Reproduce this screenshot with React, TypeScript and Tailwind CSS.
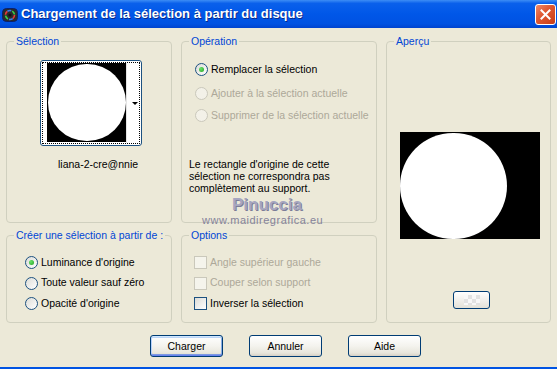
import React from 'react';

const Radio: React.FC<{ label: string; checked?: boolean; disabled?: boolean }> = ({ label, checked, disabled }) => (
  <div className="flex items-center h-[13px] gap-[3px]">
    <span
      className={
        disabled
          ? 'w-[13px] h-[13px] rounded-full border border-[#CAC8BB] bg-[#F3F1E8] flex items-center justify-center'
          : 'w-[13px] h-[13px] rounded-full border border-[#1C5180] bg-[linear-gradient(135deg,#DCDCD7,#FFFFFF)] flex items-center justify-center'
      }
    >
      {checked && <span className="w-[5px] h-[5px] rounded-full bg-[radial-gradient(circle_at_35%_35%,#6AE36A,#21A121)]" />}
    </span>
    <span className={disabled ? 'text-[#ACA899] whitespace-nowrap' : 'whitespace-nowrap'}>{label}</span>
  </div>
);

const Check: React.FC<{ label: string; disabled?: boolean }> = ({ label, disabled }) => (
  <div className="flex items-center h-[13px] gap-[3px]">
    <span
      className={
        disabled
          ? 'w-[13px] h-[13px] border border-[#CAC8BB] bg-[#F5F4EC]'
          : 'w-[13px] h-[13px] border border-[#1C5180] bg-[linear-gradient(135deg,#DCDCD7,#FFFFFF)]'
      }
    />
    <span className={disabled ? 'text-[#ACA899] whitespace-nowrap' : 'whitespace-nowrap'}>{label}</span>
  </div>
);

const Legend: React.FC<{ children: React.ReactNode }> = ({ children }) => (
  <legend className="ml-[7px] px-[2px] text-[#0046D5] leading-[13px] whitespace-nowrap">{children}</legend>
);

const XpButton: React.FC<{ label: string; isDefault?: boolean }> = ({ label, isDefault }) => (
  <button
    className={
      'w-[73px] h-[22px] rounded-[3px] border border-[#003C74] bg-[linear-gradient(to_bottom,#FFFFFF_0%,#F4F3EE_50%,#E8E6DC_85%,#D6D0C5_100%)] leading-[20px] text-black ' +
      (isDefault
        ? 'shadow-[inset_0_1px_0_#CEE7FF,inset_0_-1px_0_#6982EE,inset_1px_0_0_#B8D2FC,inset_-1px_0_0_#89ADE4,inset_0_2px_0_#BCD4F6,inset_0_-2px_0_#7D99E1]'
        : '')
    }
  >
    {label}
  </button>
);

const AppIcon = () => (
  <svg width="16" height="16" viewBox="0 0 16 16">
    <rect x="0.5" y="1.5" width="15" height="13" rx="4" fill="#2B2B2B" stroke="#0B1F6B" />
    <circle cx="8" cy="8" r="4.5" fill="none" stroke="#E83A3A" strokeWidth="1.6" strokeDasharray="4 10" />
    <circle cx="8" cy="8" r="4.5" fill="none" stroke="#3AD24A" strokeWidth="1.6" strokeDasharray="4 10" strokeDashoffset="5" />
    <circle cx="8" cy="8" r="4.5" fill="none" stroke="#3A7AE8" strokeWidth="1.6" strokeDasharray="4 10" strokeDashoffset="10" />
    <circle cx="8" cy="8" r="1.6" fill="#111" />
  </svg>
);

export default function App() {
  return (
    <div className="w-[557px] h-[369px] flex flex-col overflow-hidden font-['Liberation_Sans',Arial,sans-serif] text-[10.5px] text-black">
      {/* title bar */}
      <div className="h-[28px] flex items-center bg-[linear-gradient(to_bottom,#3D8DF5_0%,#0A60EB_12%,#0057E8_50%,#0052E2_85%,#0043CF_100%)]">
        <span className="ml-[2px] mt-[1px]"><AppIcon /></span>
        <span className="ml-[3px] text-white text-[13px] font-bold [text-shadow:1px_1px_0_#0A2A8A]">
          Chargement de la sélection à partir du disque
        </span>
        <div className="ml-auto mr-[1px] w-[21px] h-[21px] rounded-[3px] border border-white bg-[linear-gradient(135deg,#EE8A6A_0%,#E05A34_40%,#C83C16_100%)] flex items-center justify-center">
          <svg width="11" height="11" viewBox="0 0 11 11">
            <path d="M1.5 1.5 L9.5 9.5 M9.5 1.5 L1.5 9.5" stroke="white" strokeWidth="2" strokeLinecap="square" />
          </svg>
        </div>
      </div>

      {/* body */}
      <div className="flex-1 bg-[#ECE9D8] border-b-2 border-[#0054E3] pl-[6px] pt-[7px]">
        <div className="grid grid-cols-[166px_196px_165px] grid-rows-[188px_94px] gap-x-[9px] gap-y-[6px]">
          <fieldset className="border border-[#D0D0BF] rounded-[4px]">
            <Legend>Sélection</Legend>
            <div className="ml-[33px] mt-[12px] w-[102px] h-[86px] rounded-[3px] border border-[#1C5180] bg-white p-[1px]">
              <div className="h-full border border-dotted border-black flex pl-[4px]">
                <div className="w-[79px] h-[79px] bg-black flex items-center justify-center">
                  <div className="w-[78px] h-[77px] rounded-full bg-white" />
                </div>
                <div className="flex-1 flex items-center justify-end pr-[1px] border-l border-[#E4E4E4]">
                  <span className="w-0 h-0 border-l-[3px] border-r-[3px] border-t-[3px] border-l-transparent border-r-transparent border-t-black" />
                </div>
              </div>
            </div>
            <div className="ml-[51px] mt-[12px] leading-[13px]">liana-2-cre@nnie</div>
          </fieldset>

          <fieldset className="relative border border-[#D0D0BF] rounded-[4px]">
            <Legend>Opération</Legend>
            <div className="ml-[13px] mt-[15px] flex flex-col">
              <Radio label="Remplacer la sélection" checked />
              <div className="mt-[11px]"><Radio label="Ajouter à la sélection actuelle" disabled /></div>
              <div className="mt-[9px]"><Radio label="Supprimer de la sélection actuelle" disabled /></div>
            </div>
            <p className="ml-[7px] mt-[36px] leading-[12px]">
              Le rectangle d'origine de cette
              <br />
              sélection ne correspondra pas
              <br />
              complètement au support.
            </p>
            <div className="absolute left-[50px] top-[148px] text-[17px] leading-none font-bold text-[#A6A6C0] [text-shadow:1px_1px_0_#7C7C98]">
              Pinuccia
            </div>
            <div className="absolute left-[20px] top-[167px] text-[11px] leading-none tracking-[0.5px] text-[#85839A]">
              www.maidiregrafica.eu
            </div>
          </fieldset>

          <fieldset className="row-span-2 border border-[#D0D0BF] rounded-[4px]">
            <Legend>Aperçu</Legend>
            <div className="ml-[13px] mt-[84px] w-[140px] h-[107px] bg-black flex items-center">
              <div className="w-[107px] h-[106px] rounded-full bg-white" />
            </div>
            <div className="ml-[66px] mt-[52px] w-[37px] h-[18px] rounded-[3px] border border-[#003C74] bg-[linear-gradient(to_bottom,#FFFFFF,#E3E1D8)] flex items-center justify-center">
              <span className="w-[16px] h-[10px] bg-[repeating-conic-gradient(#E2E2E2_0_25%,#F8F8F8_0_50%)] bg-[length:8px_8px]" />
            </div>
          </fieldset>

          <fieldset className="border border-[#D0D0BF] rounded-[4px]">
            <Legend>Créer une sélection à partir de :</Legend>
            <div className="ml-[18px] mt-[14px] flex flex-col gap-[7.5px]">
              <Radio label="Luminance d'origine" checked />
              <Radio label="Toute valeur sauf zéro" />
              <Radio label="Opacité d'origine" />
            </div>
          </fieldset>

          <fieldset className="border border-[#D0D0BF] rounded-[4px]">
            <Legend>Options</Legend>
            <div className="ml-[12px] mt-[14px] flex flex-col gap-[7.5px]">
              <Check label="Angle supérieur gauche" disabled />
              <Check label="Couper selon support" disabled />
              <Check label="Inverser la sélection" />
            </div>
          </fieldset>
        </div>

        <div className="flex gap-[26px] ml-[144px] mt-[12px]">
          <XpButton label="Charger" isDefault />
          <XpButton label="Annuler" />
          <XpButton label="Aide" />
        </div>
      </div>
    </div>
  );
}
